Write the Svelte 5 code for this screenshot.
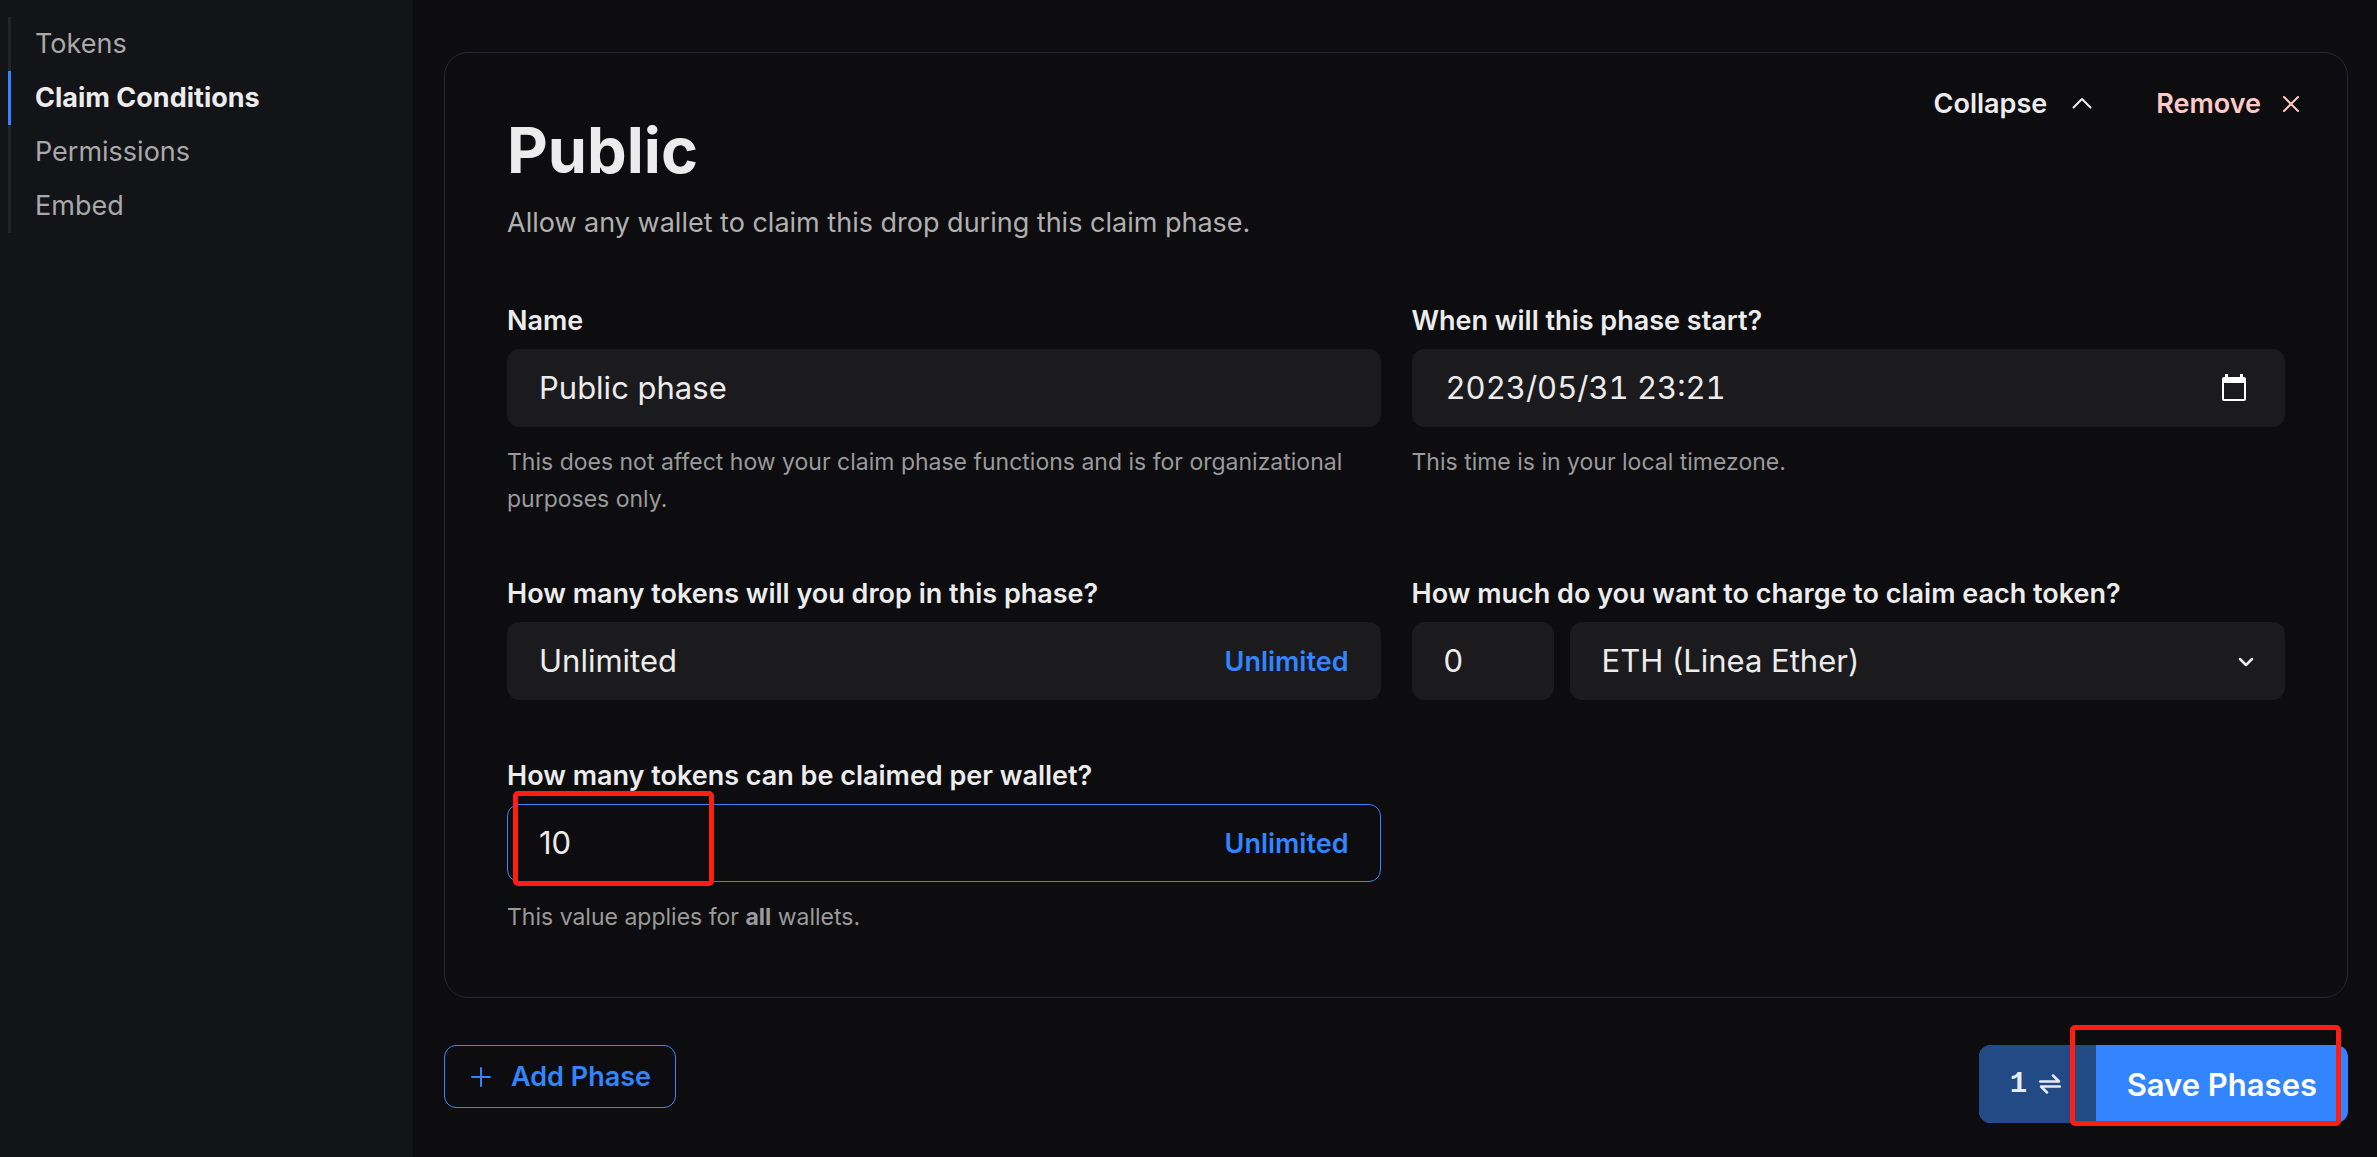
<script lang="ts">
	interface NavItem {
		label: string;
		href: string;
	}

	const navItems: NavItem[] = [
		{ label: 'Tokens', href: '#tokens' },
		{ label: 'Claim Conditions', href: '#claim-conditions' },
		{ label: 'Permissions', href: '#permissions' },
		{ label: 'Embed', href: '#embed' }
	];

	let active = $state('#claim-conditions');
	let name = $state('Public phase');
	let startTime = $state('2023/05/31 23:21');
	let supply = $state('Unlimited');
	let price = $state('0');
	let currency = $state('eth');
	let perWallet = $state('10');
</script>

<div class="layout">
	<aside>
		<nav>
			{#each navItems as item}
				<a href={item.href} class:active={active === item.href} onclick={() => (active = item.href)}>
					{item.label}
				</a>
			{/each}
		</nav>
	</aside>

	<main>
		<section class="card">
			<header>
				<div class="heading">
					<h1>Public</h1>
					<p>Allow any wallet to claim this drop during this claim phase.</p>
				</div>
				<div class="actions">
					<button class="action">
						Collapse
						<svg width="20" height="20" viewBox="0 0 20 20">
							<path d="M1.5 13.500 10 5l8.500 8.500" />
						</svg>
					</button>
					<button class="action remove">
						Remove
						<svg width="20" height="20" viewBox="0 0 20 20">
							<path d="M3 3l14 14M17 3L3 17" />
						</svg>
					</button>
				</div>
			</header>

			<div class="fields">
				<div class="field">
					<label for="name">Name</label>
					<div class="box"><input id="name" type="text" bind:value={name} /></div>
					<p class="hint">
						This does not affect how your claim phase functions and is for organizational purposes only.
					</p>
				</div>

				<div class="field">
					<label for="start">When will this phase start?</label>
					<div class="box">
						<input id="start" class="date" type="text" bind:value={startTime} />
						<button class="picker" aria-label="Open calendar">
							<svg width="26" height="28" viewBox="0 0 26 28">
								<path
									fill="#fff"
									fill-rule="evenodd"
									d="M4 0h3v3h12V0h3v3h1a2 2 0 0 1 2 2v20a2 2 0 0 1-2 2H3a2 2 0 0 1-2-2V5a2 2 0 0 1 2-2h1zM3 9v16h20V9z"
								/>
							</svg>
						</button>
					</div>
					<p class="hint">This time is in your local timezone.</p>
				</div>

				<div class="field">
					<label for="supply">How many tokens will you drop in this phase?</label>
					<div class="box">
						<input id="supply" type="text" bind:value={supply} />
						<button class="unlimited" onclick={() => (supply = 'Unlimited')}>Unlimited</button>
					</div>
				</div>

				<div class="field">
					<label for="price">How much do you want to charge to claim each token?</label>
					<div class="price-row">
						<div class="box"><input id="price" type="text" bind:value={price} /></div>
						<div class="box">
							<select aria-label="Currency" bind:value={currency}>
								<option value="eth">ETH (Linea Ether)</option>
							</select>
							<svg class="caret" width="16" height="16" viewBox="0 0 16 16">
								<path d="M2 6l6 6 6-6" />
							</svg>
						</div>
					</div>
				</div>

				<div class="field">
					<label for="per-wallet">How many tokens can be claimed per wallet?</label>
					<div class="box focused">
						<input id="per-wallet" type="text" bind:value={perWallet} />
						<button class="unlimited" onclick={() => (perWallet = 'Unlimited')}>Unlimited</button>
						<span class="marker marker-input"></span>
					</div>
					<p class="hint">This value applies for <strong>all</strong> wallets.</p>
				</div>
			</div>
		</section>

		<footer>
			<button class="add">
				<svg width="20" height="20" viewBox="0 0 20 20">
					<path d="M10 1v18M1 10h18" />
				</svg>
				Add Phase
			</button>
			<div class="save-group">
				<button class="save">
					<span class="count">
						1
						<svg width="22" height="20" viewBox="0 0 22 20">
							<path d="M1 7.500h19L14 1.500M21 12.500H2l6 6" />
						</svg>
					</span>
					<span class="save-label">Save Phases</span>
				</button>
				<span class="marker marker-save"></span>
			</div>
		</footer>
	</main>
</div>

<style>
	:global(body) {
		background: #0d0d0f;
	}

	.layout {
		display: flex;
		min-height: 100vh;
		color: #ececec;
		font-family: Inter, 'Liberation Sans', sans-serif;
		font-size: 27px;
	}

	* {
		box-sizing: border-box;
	}

	h1,
	p {
		margin: 0;
	}

	button,
	input,
	select {
		margin: 0;
		padding: 0;
		border: 0;
		outline: 0;
		background: none;
		color: inherit;
		font: inherit;
	}

	button {
		cursor: pointer;
	}

	svg {
		flex: none;
	}

	aside {
		flex: 0 0 413px;
		padding: 17px 8px;
		background: #131418;
	}

	nav {
		display: flex;
		flex-direction: column;
	}

	nav a {
		padding-left: 24px;
		border-left: 3px solid #232426;
		color: #a9a9a9;
		line-height: 54px;
		text-decoration: none;
	}

	nav a.active {
		border-color: #3385ff;
		color: #ececec;
		font-weight: 700;
	}

	main {
		flex: 1;
		min-width: 0;
		padding: 52px 29px 32px 31px;
	}

	.card {
		border: 1px solid #27282c;
		border-radius: 24px;
	}

	header {
		display: flex;
		justify-content: space-between;
		align-items: flex-start;
		padding: 0 46px 0 62px;
	}

	.heading {
		padding-top: 62px;
	}

	h1 {
		font-size: 63px;
		font-weight: 700;
		line-height: 70px;
	}

	.heading p {
		margin-top: 19px;
		color: #b0b0b0;
		line-height: 38px;
	}

	.actions {
		display: flex;
		gap: 64px;
		padding-top: 31px;
	}

	.action {
		display: flex;
		align-items: center;
		gap: 25px;
		font-weight: 600;
		line-height: 40px;
	}

	.remove {
		gap: 20px;
		color: #ffc9c6;
	}

	.action path,
	.caret path,
	.add path,
	.count path {
		fill: none;
		stroke: currentColor;
		stroke-width: 2;
		stroke-linecap: round;
		stroke-linejoin: round;
	}

	.caret path,
	.count path {
		stroke-width: 2.5;
	}

	.fields {
		display: grid;
		grid-template-columns: 1fr 1fr;
		gap: 58px 31px;
		padding: 61px 62px;
	}

	.field {
		min-width: 0;
	}

	label {
		display: block;
		margin-bottom: 10px;
		font-weight: 600;
		line-height: 36px;
	}

	.box {
		position: relative;
		display: flex;
		align-items: center;
		height: 78px;
		border: 1px solid #1b1b1d;
		border-radius: 12px;
		background: #1b1b1d;
	}

	.box.focused {
		border-color: #3385ff;
		background: transparent;
	}

	input,
	select {
		flex: 1;
		min-width: 0;
		height: 100%;
		padding: 0 31px 2px;
		font-size: 31px;
	}

	.date {
		padding-left: 33px;
		font-variant-numeric: tabular-nums;
	}

	select {
		appearance: none;
	}

	option {
		background: #1b1b1d;
	}

	.picker {
		display: flex;
		margin-right: 37px;
	}

	.caret {
		position: absolute;
		right: 30px;
		pointer-events: none;
	}

	.unlimited {
		margin-right: 31px;
		color: #3385ff;
		font-weight: 600;
	}

	.hint {
		margin-top: 17px;
		color: #9a9a9a;
		font-size: 23px;
		line-height: 37px;
	}

	.price-row {
		display: grid;
		grid-template-columns: 142px 1fr;
		gap: 16px;
	}

	footer {
		display: flex;
		justify-content: space-between;
		align-items: flex-start;
		margin-top: 47px;
	}

	.add {
		display: flex;
		align-items: center;
		gap: 20px;
		height: 63px;
		padding: 0 24px 0 26px;
		border: 1px solid #3385ff;
		border-radius: 12px;
		color: #3385ff;
		font-weight: 600;
	}

	.save-group {
		position: relative;
	}

	.save {
		display: flex;
		height: 78px;
		border-radius: 12px;
		background: #3385ff;
		overflow: hidden;
	}

	.count,
	.save-label {
		display: flex;
		align-items: center;
		padding: 0 31px;
	}

	.count {
		gap: 12px;
		width: 117px;
		background: #224a84;
		color: #e6ebf3;
		font-family: 'Liberation Mono', monospace;
		font-size: 29px;
		font-weight: 700;
	}

	.save-label {
		color: #fff;
		font-size: 31px;
		font-weight: 600;
	}

	/* highlight frames drawn over the controls */
	.marker {
		position: absolute;
		border: 5px solid #ff1e10;
		border-radius: 5px;
		pointer-events: none;
	}

	.marker-input {
		top: -14px;
		bottom: -5px;
		left: 5px;
		width: 201px;
	}

	.marker-save {
		top: -20px;
		right: 7px;
		bottom: -3px;
		left: 91px;
	}
</style>
